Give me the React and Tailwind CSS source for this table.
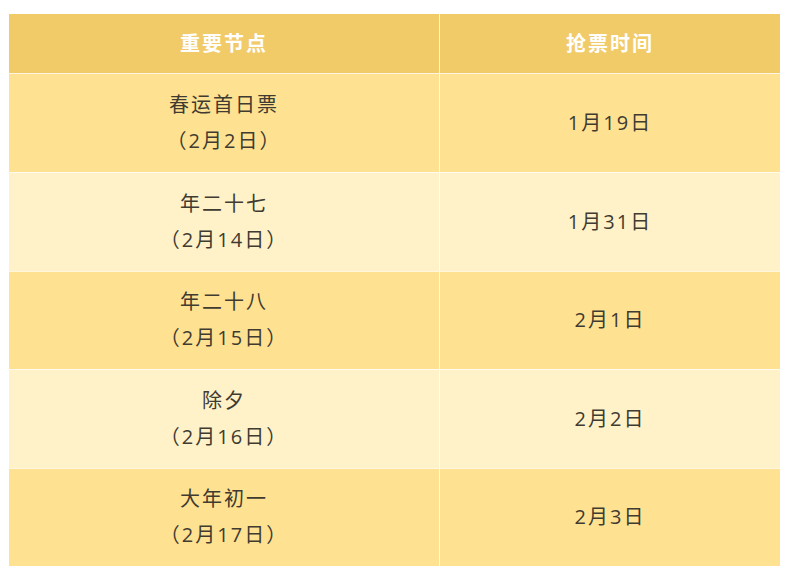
import React from 'react';

const rows = [
  { name: '春运首日票', date: '（2月2日）', grab: '1月19日' },
  { name: '年二十七', date: '（2月14日）', grab: '1月31日' },
  { name: '年二十八', date: '（2月15日）', grab: '2月1日' },
  { name: '除夕', date: '（2月16日）', grab: '2月2日' },
  { name: '大年初一', date: '（2月17日）', grab: '2月3日' },
];

const App = () => {
  return (
    <div
      className="w-[800px] h-[570px] bg-white pt-[14px] pl-[9px]"
      style={{ fontFamily: '"Open Sans", "Noto Sans CJK SC", sans-serif' }}
    >
      <div className="w-[771px] flex flex-col">
        {/* Header */}
        <div className="flex h-[60px] bg-[#f1cb68] border-b border-white/80 text-white font-bold text-[20px] tracking-[2px]">
          <div className="w-[431px] flex items-center justify-center border-r border-white/80">重要节点</div>
          <div className="flex-1 flex items-center justify-center">抢票时间</div>
        </div>

        {/* Rows */}
        {rows.map((row, i) => (
          <div
            key={row.name}
            className={`flex h-[98.4px] text-[#403b31] text-[20px] tracking-[2px] ${
              i % 2 === 0 ? 'bg-[#ffe291]' : 'bg-[#fff2c9]'
            } ${i > 0 ? 'border-t border-white/70' : ''}`}
          >
            <div className="w-[431px] flex flex-col items-center justify-center leading-[36px] border-r border-white/80">
              <span>{row.name}</span>
              <span>{row.date}</span>
            </div>
            <div className="flex-1 flex items-center justify-center">{row.grab}</div>
          </div>
        ))}
      </div>
    </div>
  );
};

export default App;
